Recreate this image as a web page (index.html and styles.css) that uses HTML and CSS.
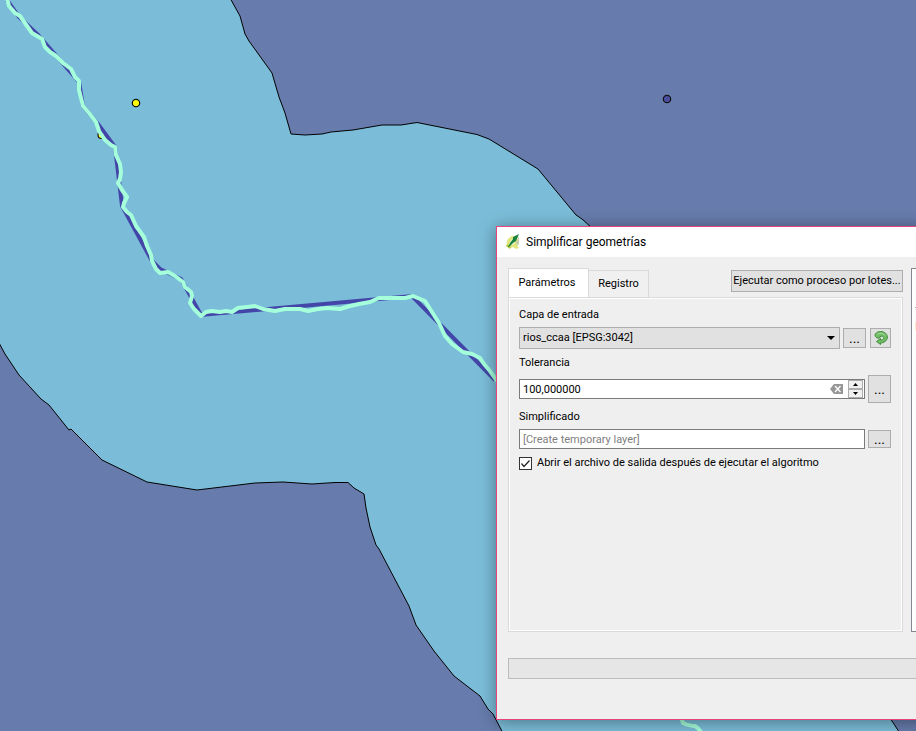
FILE: index.html
```html
<!DOCTYPE html>
<html lang="es">
<head>
<meta charset="utf-8">
<title>Simplificar geometrías</title>
<link rel="stylesheet" href="styles.css">
</head>
<body>
<main class="stage">
  <svg class="map" viewBox="0 0 916 731" preserveAspectRatio="xMinYMin slice" aria-hidden="true">
    <rect class="water" width="916" height="731"/>
    <path class="land" d="M230-2L240 16 245 34 249 41 272 73 279 97 285 113 291 134 305 135 322 134 331 132 353 130 382 125 401 125 417 122.500 477 134.500 489 139 538 169 576 215 582 219 592 228 930 240V-10H226Z"/>
    <path class="land" d="M-2 341L5 354 19 375 41 399 49 405 65 425 69 430 71 429 102 460 147 482 197 490 255 483 283 482 312 484 335 482.500 348 482.500 354 488 364 494 366 508 370 527 376 545 379 549 409 606 416 625 434 651 454 676 480 696 488 709 493 714 504 735H-2Z"/>
    <path class="land" d="M890 718L894 724 901 735H930V718Z"/>
    <circle class="spot" cx="101.500" cy="135" r="3.500"/>
    <path class="simplified" d="M7 0L19 17 38 35 66 67 79 82 83 106 98 124 115 147 118 172 122 206 152 261 160 269 181 279 201 315 412 296 495 380"/>
    <path class="river" d="M7-2L9 6 15 13 20 16 27 26 32 33 37 36 42 39 45 47 50 52 56 56 63 63 71 69 75 77 79 81 79 90 81 98 83 106 89 113 96 122 99 131 105 140 111 145 115 147 116 155 120 164 121 172 120 179 118 183 122 190 127 197 124 203 123 207 127 212 131 215 136 226 144 237 147 246 151 255 152 261 156 269 160 273 168 272 175 276 183 282 185 287 191 292 192 296 190 303 194 309 201 316 206 312 212 311 220 312 226 311 232 312 238 308 247 307 255 306 263 309 275 311 285 309 300 309 308 311 318 309 327 308 340 309 350 306 359 304 370 302 379 298 405 298 413 296 425 301 432 312 439 323 445 336 452 344 463 352 472 354 480 358 484 364 490 371 497 381"/>
    <path class="river" d="M681 717L683 723Q690 726 695 726Q700 729 702 734"/>
    <circle class="spot" cx="136" cy="103" r="3.700"/>
    <circle class="spot spot-dark" cx="667" cy="99" r="3.700"/>
  </svg>

  <section class="dialog" aria-labelledby="dialog-title">
    <header class="titlebar">
      <svg class="app-icon" viewBox="0 0 16 16" aria-hidden="true">
        <path fill="#dfe77b" d="M8 2C3 3 1 7 2 11L6 14 8 13 11 15 14 14 12 12 13 8 12 5Z"/>
        <path fill="#b4c93e" d="M2 10L6 13 5 15 1 12Z"/>
        <path fill="#f6f8df" d="M7 5L5 8 4 11 7 11 10 9 10 6Z"/>
        <path fill="#16823b" d="M14 0L8 3 8 5 5 9 3 13 4 13 8 9 11 7Z"/>
        <path fill="#c9cfa4" d="M14 2L11 8 12 12 14 10Z"/>
      </svg>
      <h1 id="dialog-title">Simplificar geometrías</h1>
    </header>

    <div class="body">
      <div class="work">
        <div class="tabs-area">
          <div class="tab-row">
            <div class="tabs" role="tablist">
              <button class="tab selected" type="button" role="tab" aria-selected="true">Parámetros</button>
              <button class="tab" type="button" role="tab" aria-selected="false">Registro</button>
            </div>
            <button class="button batch" type="button">Ejecutar como proceso por lotes...</button>
          </div>
          <form class="panel">
            <label for="layer">Capa de entrada</label>
            <div class="row">
              <div class="combo">
                <select id="layer"><option>rios_ccaa [EPSG:3042]</option></select>
                <svg class="combo-arrow" viewBox="0 0 8 4" aria-hidden="true"><path d="M0 0H8L4 4Z"/></svg>
              </div>
              <button class="button more" type="button" aria-label="Elegir capa">...</button>
              <button class="button iterate" type="button" aria-label="Iterar">
                <svg viewBox="0 0 14 14" aria-hidden="true">
                  <path fill="#73bd68" stroke="#3f8c3a" d="M1 4C2 0 8 0 10.500 1.500C14 3.500 14.500 8 11 10.500C9.500 11.500 8 12 6.500 12V13.500L2.500 10.500 6.500 7.500V9C9 9 10.500 7.500 9.500 6C8.500 4.500 5.500 5 5.500 7C3.500 7.500 1 6.500 1 4Z"/>
                  <path fill="none" stroke="#a9dda0" d="M3 3.500C5 1.500 9 2 11 4.500"/>
                </svg>
              </button>
            </div>

            <label for="tolerance">Tolerancia</label>
            <div class="row">
              <div class="field">
                <input id="tolerance" type="text" value="100,000000">
                <button class="clear" type="button" aria-label="Borrar">
                  <svg viewBox="0 0 13 10" aria-hidden="true"><path fill="#969696" d="M0 5L4 0H13V10H4Z"/><path stroke="#fff" stroke-width="1.300" d="M5 2L10.500 8M10.500 2L5 8"/></svg>
                </button>
                <span class="spin">
                  <button type="button" aria-label="Aumentar"><svg viewBox="0 0 5 3" aria-hidden="true"><path d="M2.500 0L5 3H0Z"/></svg></button>
                  <button type="button" aria-label="Disminuir"><svg viewBox="0 0 5 3" aria-hidden="true"><path d="M0 0H5L2.500 3Z"/></svg></button>
                </span>
              </div>
              <button class="button more tall" type="button" aria-label="Definir tolerancia">...</button>
            </div>

            <label for="output">Simplificado</label>
            <div class="row">
              <div class="field"><input id="output" type="text" placeholder="[Create temporary layer]"></div>
              <button class="button more short" type="button" aria-label="Elegir archivo">...</button>
            </div>

            <div class="check">
              <span class="box">
                <input id="open-output" type="checkbox" checked>
                <svg viewBox="0 0 13 13" aria-hidden="true"><path d="M2.500 6.500L5 9.500 10.500 3.500"/></svg>
              </span>
              <label for="open-output">Abrir el archivo de salida después de ejecutar el algoritmo</label>
            </div>
          </form>
        </div>
        <aside class="help">
          <svg viewBox="0 0 26 100" aria-hidden="true">
            <path fill="#b5a68a" d="M3 38H26V39H3Z"/>
            <path fill="#fce9c3" d="M3 53H26V61H3ZM3 82L26 79V82Z"/>
          </svg>
        </aside>
      </div>
      <div class="progress"></div>
    </div>
  </section>
</main>
</body>
</html>
```
FILE: styles.css
```css
* { box-sizing: border-box; }

body {
  margin: 0;
  font: 11px/16px Roboto, "Noto Sans", sans-serif;
  color: #000;
}

button, input, select { font: inherit; color: inherit; }

.stage {
  position: relative;
  min-height: 100vh;
  overflow: hidden;
  background: #7bbdd8;
}

.map {
  position: absolute;
  inset: 0;
  width: 100%;
  height: 100%;
}

.water { fill: #7bbdd8; }
.land { fill: #677cac; stroke: #000; stroke-width: 1; }
.simplified { fill: none; stroke: #4346a8; stroke-width: 4; }
.river { fill: none; stroke: #a5ffda; stroke-width: 4; stroke-linejoin: round; }
.spot { fill: #ff0; stroke: #111; stroke-width: 1.2; }
.spot-dark { fill: #4c4f9f; }

.dialog {
  position: absolute;
  top: 226px;
  left: 496px;
  right: -24px;
  background: #efefef;
  border: 1px solid #e8437c;
  box-shadow: 0 2px 16px rgba(0, 0, 0, .4);
}

.titlebar {
  display: flex;
  align-items: center;
  gap: 5px;
  height: 30px;
  padding-left: 8px;
  background: #fff;
}

.titlebar h1 {
  margin: 0;
  font: 12px/16px Roboto, sans-serif;
}

.app-icon { width: 16px; height: 16px; }

.body { padding: 11px 0 40px 11px; }

.work { display: flex; gap: 8px; }

.tabs-area {
  flex: 1;
  display: flex;
  flex-direction: column;
}

.tab-row {
  display: flex;
  align-items: flex-start;
  justify-content: space-between;
}

.tabs { display: flex; align-items: flex-end; }

.tab {
  height: 27px;
  width: 60px;
  padding: 0;
  border: 1px solid #d9d9d9;
  border-width: 1px 1px 0 0;
  background: #f0f0f0;
}

.tab.selected {
  width: 81px;
  height: 29px;
  padding-right: 3px;
  border-left-width: 1px;
  background: #fff;
}

.button {
  padding: 0;
  border: 1px solid #adadad;
  background: #e1e1e1;
  white-space: nowrap;
}

.batch {
  width: 172px;
  height: 22px;
  margin-top: 2px;
}

.panel {
  display: flex;
  flex-direction: column;
  height: 335px;
  padding: 9px 11px 9px 10px;
  border: 1px solid #d9d9d9;
  outline: 1px solid #fff;
  outline-offset: -2px;
}

.row {
  display: flex;
  align-items: center;
  gap: 3px;
  margin: 4px 0 6px;
}

.combo { position: relative; flex: 1; }

.combo select {
  display: block;
  width: 100%;
  height: 22px;
  padding: 0 3px;
  border: 1px solid #adadad;
  border-radius: 0;
  background: #e1e1e1;
  appearance: none;
}

.combo-arrow {
  position: absolute;
  top: 9px;
  right: 5px;
  width: 8px;
  height: 4px;
}

.more { width: 23px; height: 20px; font-size: 14px; }
.more.tall { height: 28px; }
.more.short { height: 18px; line-height: 14px; }

.iterate {
  display: grid;
  place-items: center;
  width: 21px;
  height: 20px;
  margin-left: 1px;
}

.iterate svg { width: 14px; height: 14px; }

.field {
  flex: 1;
  display: flex;
  align-items: center;
  height: 20px;
  border: 1px solid #7a7a7a;
  background: #fff;
}

.field input {
  flex: 1;
  min-width: 0;
  height: 18px;
  padding: 0 3px;
  border: 0;
  background: none;
}

.field input::placeholder { color: #808080; opacity: 1; }

.clear {
  width: 13px;
  height: 10px;
  margin-right: 5px;
  padding: 0;
  border: 0;
  background: none;
}

.clear svg { display: block; width: 13px; height: 10px; }

.spin {
  display: flex;
  flex-direction: column;
  width: 15px;
  margin-right: 1px;
}

.spin button {
  display: grid;
  place-items: center;
  height: 9px;
  padding: 0;
  border: 1px solid #adadad;
  background: #f0f0f0;
}

.spin svg { width: 5px; height: 3px; }

.check {
  display: flex;
  align-items: center;
  gap: 5px;
}

.box {
  position: relative;
  width: 13px;
  height: 13px;
}

.box input {
  display: block;
  width: 13px;
  height: 13px;
  margin: 0;
  border: 1px solid #333;
  background: #fff;
  appearance: none;
}

.box svg {
  position: absolute;
  inset: 0;
  fill: none;
  stroke: #222;
  stroke-width: 1.2;
  pointer-events: none;
  visibility: hidden;
}

.box input:checked + svg { visibility: visible; }

.help {
  width: 28px;
  border: 1px solid #828790;
  background: #fff;
}

.help svg { display: block; width: 26px; height: 100px; }

.progress {
  height: 21px;
  margin-top: 26px;
  border: 1px solid #bcbcbc;
  background: #e6e6e6;
}
```
